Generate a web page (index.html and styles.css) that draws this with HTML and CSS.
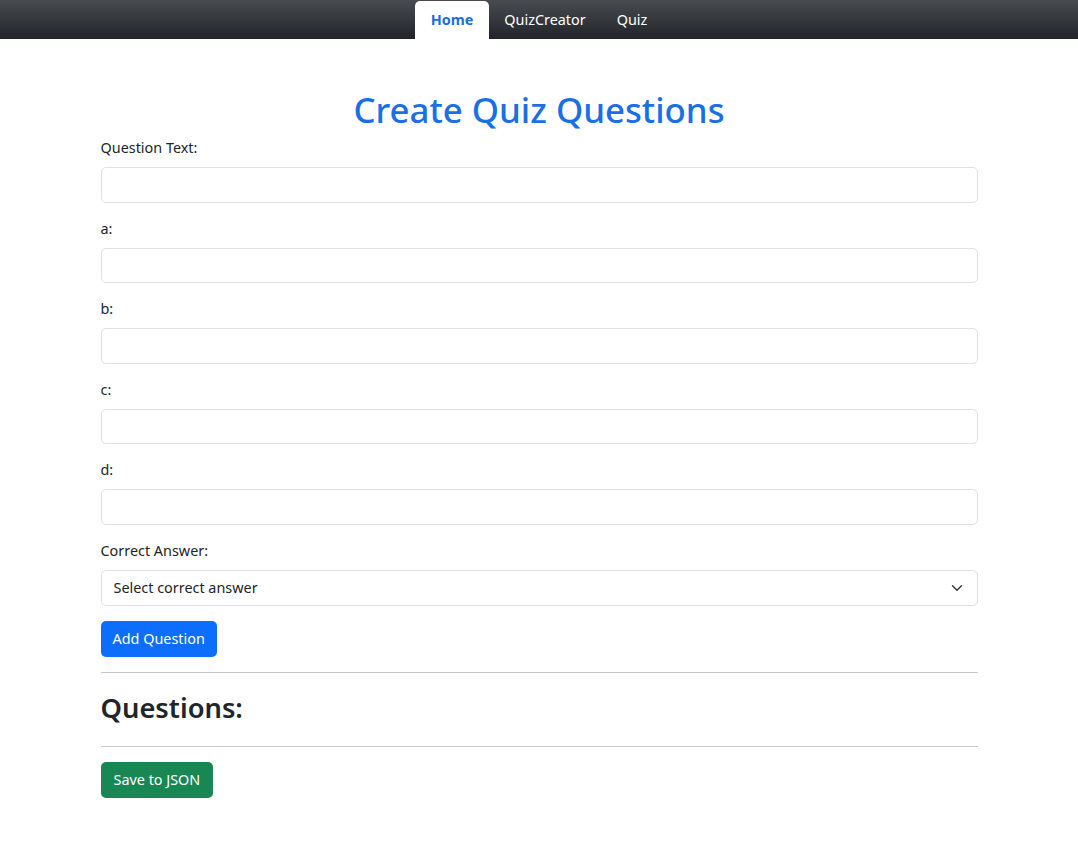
FILE: index.html
```html
<!DOCTYPE html>
<html lang="en">
<head>
<meta charset="utf-8">
<title>Quiz Creator</title>
<link rel="stylesheet" href="styles.css">
</head>
<body>
<nav class="topbar">
  <ul class="nav-links">
    <li><a class="nav-link active" href="#">Home</a></li>
    <li><a class="nav-link" href="#">QuizCreator</a></li>
    <li><a class="nav-link" href="#">Quiz</a></li>
  </ul>
</nav>
<main class="container">
  <h1 class="title">Create Quiz Questions</h1>
  <form class="quiz-form">
    <div class="field">
      <label class="field-label">Question Text:</label>
      <input class="field-input" type="text">
    </div>
    <div class="field">
      <label class="field-label">a:</label>
      <input class="field-input" type="text">
    </div>
    <div class="field">
      <label class="field-label">b:</label>
      <input class="field-input" type="text">
    </div>
    <div class="field">
      <label class="field-label">c:</label>
      <input class="field-input" type="text">
    </div>
    <div class="field">
      <label class="field-label">d:</label>
      <input class="field-input" type="text">
    </div>
    <div class="field">
      <label class="field-label">Correct Answer:</label>
      <div class="field-select">
        <span>Select correct answer</span>
        <svg class="chevron" width="16" height="12" viewBox="0 0 16 16"><path d="m2 5 6 6 6-6" fill="none" stroke="#343a40" stroke-width="2" stroke-linecap="round" stroke-linejoin="round"/></svg>
      </div>
    </div>
    <button type="button" class="btn btn-primary">Add Question</button>
  </form>
  <hr class="divider">
  <h2 class="subtitle">Questions:</h2>
  <hr class="divider divider-low">
  <button type="button" class="btn btn-success">Save to JSON</button>
</main>
</body>
</html>
```

FILE: styles.css
```css
* { box-sizing: border-box; }

html, body {
  margin: 0;
  padding: 0;
  background: #fff;
}

body {
  font-family: "Noto Sans", "Open Sans", sans-serif;
  font-size: 14.4px;
  line-height: 1.5;
  color: #212529;
}

.topbar {
  height: 39px;
  background: linear-gradient(#484b4f, #212529);
  display: flex;
  justify-content: center;
  align-items: flex-end;
}

.nav-links {
  list-style: none;
  margin: 0;
  padding: 0;
  display: flex;
  height: 38px;
}

.nav-link {
  display: flex;
  align-items: center;
  height: 38px;
  padding: 0 15.5px;
  color: #fff;
  text-decoration: none;
  border-radius: 5px 5px 0 0;
}

.nav-link.active {
  background: #fff;
  color: #1b6ee0;
  font-weight: 700;
}

.container {
  width: 877px;
  margin: 0 auto;
  padding-top: 49px;
}

.title {
  margin: 0 0 6px;
  text-align: center;
  font-size: 34.8px;
  font-weight: 500;
  line-height: 43px;
  color: #1a6ee6;
}

.quiz-form {
  display: flex;
  flex-direction: column;
  align-items: flex-start;
}

.field {
  width: 100%;
  margin-bottom: 15px;
}

.field-label {
  display: block;
  line-height: 22px;
  margin-bottom: 8px;
}

.field-input,
.field-select {
  display: block;
  width: 100%;
  height: 35.6px;
  border: 1px solid #dee2e6;
  border-radius: 5px;
  background: #fff;
  font: inherit;
  padding: 0 12px;
}

.field-select {
  display: flex;
  align-items: center;
  justify-content: space-between;
  color: #212529;
}

.chevron {
  display: block;
}

.btn {
  font: inherit;
  color: #fff;
  border: none;
  border-radius: 5px;
  height: 36px;
  padding: 0 12px;
  line-height: 36px;
}

.btn-primary {
  background: #0d6efd;
}

.btn-success {
  background: #198754;
  padding: 0 13px;
}

.divider {
  border: none;
  border-top: 1px solid #c7c8c9;
  margin: 15px 0 18px;
}

.divider-low {
  margin: 21px 0 15px;
}

.subtitle {
  margin: 0 0 7px;
  font-size: 27.3px;
  font-weight: 600;
  line-height: 34.5px;
}
```
